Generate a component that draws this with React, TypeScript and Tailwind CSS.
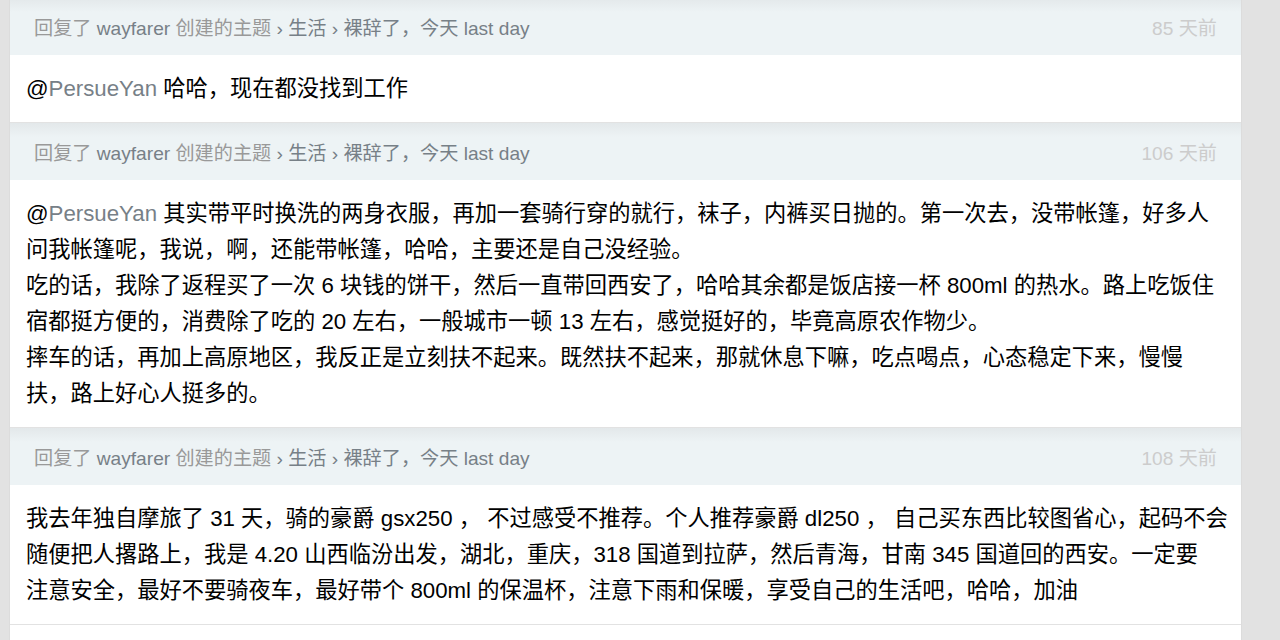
import React from "react";

type Reply = {
    time: string;
    lines: React.ReactNode[];
};

const at = (
    <>
        @<span className="text-[#778087]">PersueYan</span>{" "}
    </>
);

const replies: Reply[] = [
    {
        time: "85 天前",
        lines: [<>{at}哈哈，现在都没找到工作</>],
    },
    {
        time: "106 天前",
        lines: [
            <>{at}其实带平时换洗的两身衣服，再加一套骑行穿的就行，袜子，内裤买日抛的。第一次去，没带帐篷，好多人</>,
            "问我帐篷呢，我说，啊，还能带帐篷，哈哈，主要还是自己没经验。",
            "吃的话，我除了返程买了一次 6 块钱的饼干，然后一直带回西安了，哈哈其余都是饭店接一杯 800ml 的热水。路上吃饭住",
            "宿都挺方便的，消费除了吃的 20 左右，一般城市一顿 13 左右，感觉挺好的，毕竟高原农作物少。",
            "摔车的话，再加上高原地区，我反正是立刻扶不起来。既然扶不起来，那就休息下嘛，吃点喝点，心态稳定下来，慢慢",
            "扶，路上好心人挺多的。",
        ],
    },
    {
        time: "108 天前",
        lines: [
            "我去年独自摩旅了 31 天，骑的豪爵 gsx250 ， 不过感受不推荐。个人推荐豪爵 dl250 ， 自己买东西比较图省心，起码不会",
            "随便把人撂路上，我是 4.20 山西临汾出发，湖北，重庆，318 国道到拉萨，然后青海，甘南 345 国道回的西安。一定要",
            "注意安全，最好不要骑夜车，最好带个 800ml 的保温杯，注意下雨和保暖，享受自己的生活吧，哈哈，加油",
        ],
    },
];

function ReplyHeader({ time, first }: { time: string; first?: boolean }) {
    return (
        <div
            className={`h-[57px] flex items-center justify-between px-[24px] pt-[6px] text-[19.15px] bg-[linear-gradient(to_bottom,#e3e8ea_0px,#edf3f5_14px,#edf3f5_100%)] ${first ? "-mt-[2px]" : ""}`}
        >
            <div className="whitespace-nowrap">
                <span className="text-[#999999]">回复了 </span>
                <span className="text-[#778087]">wayfarer</span>
                <span className="text-[#999999]"> 创建的主题 </span>
                <span className="text-[#778087]">› 生活 › 裸辞了，今天 last day</span>
            </div>
            <span className="text-[#cccccc] whitespace-nowrap">{time}</span>
        </div>
    );
}

export default function App() {
    return (
        <div
            className="w-full h-[640px] overflow-hidden bg-[#e2e2e2] pl-[10px] pr-[39px]"
            style={{ fontFamily: '"Liberation Sans", "Noto Sans CJK SC", sans-serif' }}
        >
            <div className="bg-white shadow-[0_0_1px_rgba(0,0,0,0.15)]">
                {replies.map((r, i) => (
                    <div key={i}>
                        <ReplyHeader time={r.time} first={i === 0} />
                        <div className="px-[16px] pt-[16px] pb-[15px] text-[22.25px] leading-[36px] text-black border-b border-[#e2e2e2]">
                            {r.lines.map((l, j) => (
                                <div key={j} className="whitespace-nowrap">
                                    {l}
                                </div>
                            ))}
                        </div>
                    </div>
                ))}
                <div className="h-[40px] bg-white" />
            </div>
        </div>
    );
}
